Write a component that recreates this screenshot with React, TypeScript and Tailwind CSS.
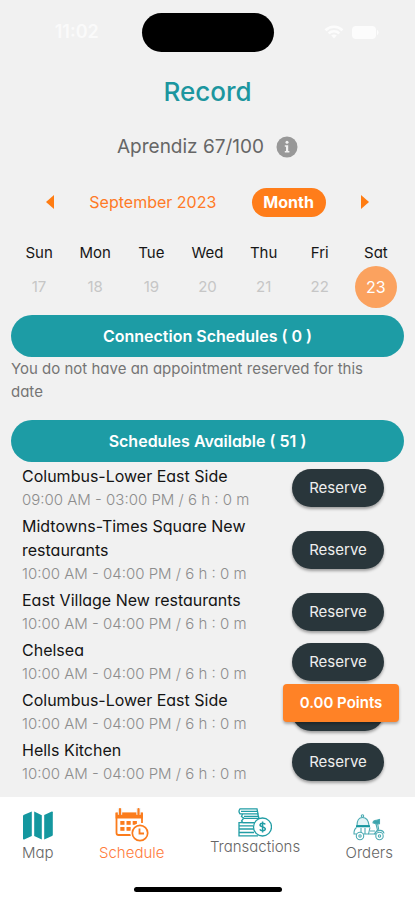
import React from "react";

const days = [
  { name: "Sun", date: 17 },
  { name: "Mon", date: 18 },
  { name: "Tue", date: 19 },
  { name: "Wed", date: 20 },
  { name: "Thu", date: 21 },
  { name: "Fri", date: 22 },
  { name: "Sat", date: 23 },
];

const schedules = [
  { place: "Columbus-Lower East Side", time: "09:00 AM - 03:00 PM / 6 h : 0 m" },
  { place: "Midtowns-Times Square New restaurants", time: "10:00 AM - 04:00 PM / 6 h : 0 m" },
  { place: "East Village New restaurants", time: "10:00 AM - 04:00 PM / 6 h : 0 m" },
  { place: "Chelsea", time: "10:00 AM - 04:00 PM / 6 h : 0 m" },
  { place: "Columbus-Lower East Side", time: "10:00 AM - 04:00 PM / 6 h : 0 m" },
  { place: "Hells Kitchen", time: "10:00 AM - 04:00 PM / 6 h : 0 m" },
];

function StatusBar() {
  return (
    <div className="grid h-16 grid-cols-[1fr_132px_1fr] items-center">
      <span className="pl-3 text-center text-lg font-semibold text-[#fafafa]">11:02</span>
      <div className="h-[39px] rounded-full bg-black" />
      <div className="flex items-center justify-end gap-2 pr-9 text-[#fcfcfc]">
        <svg width="20" height="14" viewBox="0 0 20 14" fill="none" stroke="currentColor" strokeWidth="2.6" aria-hidden="true">
          <path d="M1.5 5.2C6.300 .6 13.700 .6 18.500 5.200M4.700 8.400c3-2.800 7.600-2.800 10.600 0" />
          <path d="M10 13.500 7.200 10.600c1.600-1.400 4-1.400 5.600 0Z" fill="currentColor" stroke="none" />
        </svg>
        <svg width="27" height="13" viewBox="0 0 27 13" fill="currentColor" aria-hidden="true">
          <rect x="0" y="0" width="24" height="13" rx="4" />
          <path d="M25 4c2 .6 2 4.400 0 5Z" />
        </svg>
      </div>
    </div>
  );
}

function InfoIcon() {
  return (
    <svg width="22" height="22" viewBox="0 0 22 22" aria-hidden="true">
      <circle cx="11" cy="11" r="10.500" fill="#989898" />
      <circle cx="11" cy="6.300" r="1.500" fill="#f1f1f1" />
      <path d="M8.800 9.300H12.200V15h1.200v1.500H8.800V15H10v-4.200H8.800Z" fill="#f1f1f1" />
    </svg>
  );
}

function MapIcon() {
  return (
    <svg width="30" height="29" viewBox="0 0 30 29" fill="#14979f" aria-hidden="true">
      <path d="M0 5.200Q0 4.200 1 3.800L8.800 .5V25L1.200 28.500Q0 28.900 0 27.800Z" />
      <path d="M11.200.5 18.800 4.200V28.500L11.200 25Z" />
      <path d="M21.200 4 28.800.6Q29.800.3 29.800 1.300V23.800Q29.800 24.700 29 25.100L21.200 28.500Z" />
    </svg>
  );
}

function ScheduleIcon() {
  return (
    <svg width="34" height="34" viewBox="0 0 34 34" fill="none" stroke="#fb7c1c" aria-hidden="true">
      <path d="M16 27H3.500Q1.500 27 1.500 25V5.500H27V15" strokeWidth="1.800" />
      <path d="M.6 4.800h27.300V10.500H.6Z" fill="#fb7c1c" stroke="none" />
      <path d="M5 0v6.800M23.500 0v6.800" stroke="#f1f1f1" strokeWidth="4.400" />
      <path d="M5 1.200v5M23.500 1.200v5" strokeWidth="2.200" strokeLinecap="round" />
      <g fill="#fb7c1c" stroke="none">
        <rect x="5.300" y="13" width="4.200" height="3.800" />
        <rect x="11.500" y="13" width="4.200" height="3.800" />
        <rect x="17.700" y="13" width="4.200" height="3.800" />
        <rect x="5.300" y="19" width="4.200" height="3.800" />
        <rect x="11.500" y="19" width="4.200" height="3.800" />
      </g>
      <circle cx="25" cy="25" r="9.800" fill="#fff" stroke="none" />
      <circle cx="25" cy="25" r="7.700" strokeWidth="1.700" />
      <path d="M24.500 20.500v5h4.500" strokeWidth="1.800" />
    </svg>
  );
}

function TransactionsIcon() {
  return (
    <svg width="34" height="29" viewBox="0 0 34 29" fill="none" stroke="#219da5" strokeWidth="1.300" aria-hidden="true">
      <path d="M2 .8h17l1 5H2Q0 3.300 2 .8ZM3 3.300h16" />
      <path d="M4.500 6l-1 2.500 2.500 1.800h15l-1.300-4.500M6 8.300h14" />
      <path d="M5.500 10.300 3.500 13 5 14.700h14" />
      <path d="M18 14.700H1V21h17M1 17.800h14M1 21v6.800h19M1 24.500h15" />
      <circle cx="24.500" cy="19" r="9" fill="#fff" />
      <path d="M27.300 16.300c-.8-1.500-5-1.700-5.300.5-.2 2.600 5.400 1.500 5.300 4.200-.2 2.300-4.600 2.200-5.500.4M24.600 13.500v11" strokeWidth="1.500" />
    </svg>
  );
}

function OrdersIcon() {
  return (
    <svg width="32" height="27" viewBox="0 0 32 27" fill="none" stroke="#4aaab2" strokeWidth="1.100" aria-hidden="true">
      <circle cx="9.500" cy="2" r="1.200" />
      <path d="M4 11.500C4 6.500 6 3.500 9.500 3.500s6 3 6.500 8Z" fill="#e3f4f6" />
      <path d="M3 12.300h14" stroke="#14979f" strokeWidth="2" />
      <path d="M3.500 13.500Q.8 15.500 1 20h14.500l1.500-6.500M8 14v6M12 14v6" />
      <path d="M15.500 20h5.500L24.500 16l-2.200-9M17 17h5M26 17l-1.500-8" />
      <path d="M20 8.800c0-2.300 1.800-2.300 3.500-2.600l3-.7v4.200l-3 .3Z" fill="#3ba3ac" />
      <path d="M22 21c0-5 8-6.500 9-1.500" />
      <circle cx="7" cy="22" r="3.700" fill="#fff" />
      <circle cx="7" cy="22" r="1.200" />
      <circle cx="26.500" cy="22" r="3.700" fill="#fff" />
      <circle cx="26.500" cy="22" r="1.200" />
    </svg>
  );
}

function SectionBar({ title }: { title: string }) {
  return (
    <h2 className="flex h-[42px] items-center justify-center rounded-full bg-[#1d9ca5] text-base font-semibold text-white">
      {title}
    </h2>
  );
}

export default function App() {
  return (
    <div className="flex min-h-screen flex-col bg-[#f1f1f1] font-['Inter',sans-serif] [font-feature-settings:'cv11']">
      <StatusBar />

      <main className="relative flex-1 px-[11px]">
        <h1 className="pt-3 text-center text-[26px] leading-8 font-medium text-[#1c969f]">Record</h1>

        <div className="mt-7 flex items-center justify-center gap-3 leading-[22px]">
          <p className="text-[19px] text-[#666]">Aprendiz 67/100</p>
          <button type="button" aria-label="Level information">
            <InfoIcon />
          </button>
        </div>

        <div className="mt-7 flex h-8 items-center justify-between px-[35px]">
          <button type="button" aria-label="Previous week">
            <svg width="8" height="14" viewBox="0 0 8 14" fill="#ff7c12" aria-hidden="true">
              <path d="M8 0v14L0 7Z" />
            </svg>
          </button>
          <span className="text-base text-[#ff7a26]">September 2023</span>
          <button type="button" className="h-[29px] w-[74px] rounded-full bg-[#ff7d1a] text-base font-bold text-white">
            Month
          </button>
          <button type="button" aria-label="Next week">
            <svg width="8" height="14" viewBox="0 0 8 14" fill="#ff7c12" aria-hidden="true">
              <path d="M0 0v14l8-7Z" />
            </svg>
          </button>
        </div>

        <div className="mt-[23px] grid grid-cols-7">
          {days.map((day) => (
            <div key={day.name} className="flex flex-col items-center">
              <span className="text-[15px] leading-6 text-[#161616]">{day.name}</span>
              <button
                type="button"
                className={
                  day.date === 23
                    ? "my-px size-[42px] rounded-full bg-[#fba25f] text-base text-white"
                    : "my-px size-[42px] rounded-full text-[15px] text-[#c6c6c6]"
                }
              >
                {day.date}
              </button>
            </div>
          ))}
        </div>

        <section className="mt-[6px]">
          <SectionBar title="Connection Schedules ( 0 )" />
          <p className="pr-4 text-[15px] leading-[23px] text-[#757575]">
            You do not have an appointment reserved for this date
          </p>
        </section>

        <section className="mt-[17px]">
          <SectionBar title="Schedules Available ( 51 )" />
          <ul className="mt-px pr-5 pl-[11px]">
            {schedules.map((item, index) => (
              <li key={index} className="flex items-center justify-between gap-4 py-px">
                <div className="leading-6">
                  <h3 className="text-base text-[#141414]">{item.place}</h3>
                  <p className="text-[15px] leading-6 font-light text-[#8d8d8d]">{item.time}</p>
                </div>
                <button
                  type="button"
                  className="h-[38px] w-[92px] shrink-0 rounded-full bg-[#29363b] text-[15px] text-[#eeeeee] shadow-[0_2px_3px_rgba(0,0,0,0.35)]"
                >
                  Reserve
                </button>
              </li>
            ))}
          </ul>
        </section>

        <button
          type="button"
          className="absolute right-4 bottom-[75px] h-[38px] w-[116px] rounded-[4px] bg-[#ff8226] text-[15px] font-semibold text-white shadow-[0_2px_3px_rgba(0,0,0,0.3)]"
        >
          0.00 Points
        </button>
      </main>

      <footer className="h-[103px] bg-white">
        <nav className="flex h-[90px] justify-between px-[22px] text-[15px] leading-5 font-light text-[#666]">
          <a href="#map" className="flex flex-col items-center pt-[14px]">
            <MapIcon />
            <span className="mt-[3px]">Map</span>
          </a>
          <a href="#schedule" className="flex flex-col items-center pt-[11px] text-[#ff7b3a]">
            <ScheduleIcon />
            <span className="mt-px">Schedule</span>
          </a>
          <a href="#transactions" className="flex flex-col items-center pt-[11px]">
            <TransactionsIcon />
            <span>Transactions</span>
          </a>
          <a href="#orders" className="flex flex-col items-center pt-[17px]">
            <OrdersIcon />
            <span className="mt-[2px]">Orders</span>
          </a>
        </nav>
        <div className="mx-auto h-[5px] w-[148px] rounded-full bg-black" />
      </footer>
    </div>
  );
}
